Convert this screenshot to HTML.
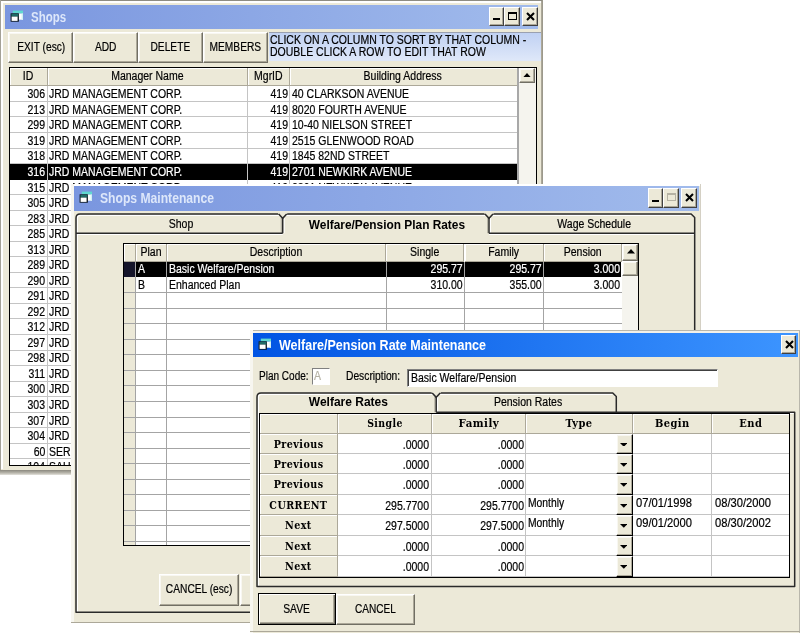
<!DOCTYPE html><html><head><meta charset="utf-8"><title>Shops</title><style>
*{box-sizing:border-box;margin:0;padding:0}
html,body{width:800px;height:633px;overflow:hidden;background:#fff}
body{position:relative;will-change:transform;font-family:"Liberation Sans",sans-serif;font-size:12px;color:#000}
.a{position:absolute}
.win{position:absolute;background:#ECE9D8;overflow:hidden}
.tb{position:absolute;color:#fff;font-weight:bold;font-size:14px;white-space:nowrap}
.cap{position:absolute;display:inline-block;transform-origin:0 50%;white-space:nowrap}
.cb{position:absolute;background:#ECE9D8;border:1px solid;border-color:#fff #404040 #404040 #fff;box-shadow:inset -1px -1px 0 #ACA899}
.btn{position:absolute;background:#ECE9D8;border:1px solid;border-color:#fff #716F64 #716F64 #fff;box-shadow:inset -1px -1px 0 #ACA899, inset 1px 1px 0 #F8F7F1;text-align:center;white-space:nowrap}
.t{display:inline-block;white-space:nowrap;transform:scaleX(.875);-webkit-text-stroke:.2px}
.tl{transform-origin:0 50%}
.tr{transform-origin:100% 50%}
.tc{transform-origin:50% 50%}
.grid{position:absolute;background:#fff;overflow:hidden}
.hl{position:absolute;height:1px;background:#C4C4C4}
.vl{position:absolute;width:1px;background:#C4C4C4}
.cell{position:absolute;white-space:nowrap;overflow:visible}
.hd{position:absolute;background:#ECE9D8;border-right:1px solid #ACA899;border-bottom:1px solid #ACA899;box-shadow:inset 1px 1px 0 #fff;text-align:center;white-space:nowrap}
.sb{position:absolute;background:#F5F4EE}
.serif{font-family:"DejaVu Serif","Liberation Serif",serif;font-weight:bold;font-size:11px;letter-spacing:.5px}
.serif .t{-webkit-text-stroke:0}
</style></head><body>
<div class="win" style="left:0;top:0;width:542.5px;height:469.5px">
<div class="a" style="left:0px;top:0px;width:542.5px;height:1px;background:#8E8C82"></div>
<div class="a" style="left:0px;top:0px;width:1px;height:469.5px;background:#A3A196"></div>
<div class="a" style="left:1px;top:1px;width:540.5px;height:2px;background:#fff"></div>
<div class="a" style="left:1px;top:1px;width:2px;height:468px;background:#fff"></div>
<div class="a" style="left:541.5px;top:0px;width:1.0px;height:469.5px;background:#9C998C"></div>
<div class="a" style="left:540.5px;top:1px;width:1.0px;height:468.5px;background:#ACA899"></div>
<div class="tb" style="left:5px;top:4.6px;width:533px;height:24.8px;line-height:24.8px;background:linear-gradient(90deg,#7A96DF,#A1BBEC);color:#DDE7FA">
<span class="cap" style="left:25.5px;top:0;transform:scaleX(.82)">Shops</span></div>
<svg class="a" style="left:10px;top:10px" width="14" height="12" viewBox="0 0 14 12"><rect x="2.8" y="0.6" width="10.2" height="3" fill="#5FD8D0"/><rect x="8" y="3.6" width="5" height="6.1" fill="#FDFDFD"/><rect x="11.6" y="3.6" width="1.4" height="6.1" fill="#CFF1F2"/><rect x="0.6" y="3.3" width="8.3" height="8.4" fill="#0C141C"/><rect x="1.4" y="3.8" width="7" height="2.8" fill="#1F6A66"/><rect x="1.6" y="6.6" width="6" height="4.3" fill="#fff"/></svg>
<div class="cb" style="left:489px;top:7px;width:14.5px;height:19px;"><div class="a" style="left:3px;top:10px;width:6.5px;height:2.3px;background:#000"></div></div>
<div class="cb" style="left:504px;top:7px;width:15.5px;height:19px;"><div class="a" style="left:2.5px;top:3.5px;width:9px;height:8.5px;border:1px solid #000;border-top-width:2px"></div></div>
<div class="cb" style="left:521.5px;top:7px;width:16.0px;height:19px;"><svg class="a" style="left:3px;top:4px" width="9" height="9" viewBox="0 0 9 9"><path d="M1 1 L8 8 M8 1 L1 8" stroke="#000" stroke-width="2.1"/></svg></div>
<div class="btn" style="left:8.2px;top:32px;width:65.3px;height:31.3px;line-height:29.5px"><span class="t tc" style="transform:scaleX(.85)">EXIT (esc)</span></div>
<div class="btn" style="left:73.2px;top:32px;width:65.3px;height:31.3px;line-height:29.5px"><span class="t tc" style="transform:scaleX(.85)">ADD</span></div>
<div class="btn" style="left:138.2px;top:32px;width:65.3px;height:31.3px;line-height:29.5px"><span class="t tc" style="transform:scaleX(.85)">DELETE</span></div>
<div class="btn" style="left:203.2px;top:32px;width:65.3px;height:31.3px;line-height:29.5px"><span class="t tc" style="transform:scaleX(.85)">MEMBERS</span></div>
<div class="a" style="left:269px;top:32px;width:272px;height:29px;background:linear-gradient(180deg,#C0D1F3,#DFE8F9);border-top:1px solid #9aa0b0"></div>
<div class="cell " style="left:270.3px;top:33.8px;width:267.7px;height:12.6px;line-height:12.6px;text-align:left;"><span class="t tl">CLICK ON A COLUMN TO SORT BY THAT COLUMN -</span></div>
<div class="cell " style="left:270.3px;top:45.7px;width:267.7px;height:12.6px;line-height:12.6px;text-align:left;"><span class="t tl">DOUBLE CLICK A ROW TO EDIT THAT ROW</span></div>
<div class="a" style="left:9px;top:66.5px;width:527.5px;height:399px;background:#000"></div>
<div class="grid" style="left:10px;top:67.5px;width:525.5px;height:397px">
<div class="hd" style="left:0px;top:0.0px;width:37.5px;height:18.4px;line-height:16.5px"><span class="t tc">ID</span></div>
<div class="hd" style="left:37.5px;top:0.0px;width:200.0px;height:18.4px;line-height:16.5px"><span class="t tc">Manager Name</span></div>
<div class="hd" style="left:237.5px;top:0.0px;width:42.0px;height:18.4px;line-height:16.5px"><span class="t tc">MgrID</span></div>
<div class="hd" style="left:279.5px;top:0.0px;width:228.0px;height:18.4px;line-height:16.5px"><span class="t tc">Building Address</span></div>
<div class="cell " style="left:0px;top:19.8px;width:35.5px;height:15.53px;line-height:15.53px;text-align:right;"><span class="t tr">306</span></div>
<div class="cell " style="left:38.5px;top:19.8px;width:197.5px;height:15.53px;line-height:15.53px;text-align:left;"><span class="t tl">JRD MANAGEMENT CORP.</span></div>
<div class="cell " style="left:238px;top:19.8px;width:40px;height:15.53px;line-height:15.53px;text-align:right;"><span class="t tr">419</span></div>
<div class="cell " style="left:281.8px;top:19.8px;width:226.2px;height:15.53px;line-height:15.53px;text-align:left;"><span class="t tl">40 CLARKSON AVENUE</span></div>
<div class="hl" style="left:0px;top:33.44px;width:507.2px;height:1.0px;"></div>
<div class="cell " style="left:0px;top:35.34px;width:35.5px;height:15.53px;line-height:15.53px;text-align:right;"><span class="t tr">213</span></div>
<div class="cell " style="left:38.5px;top:35.34px;width:197.5px;height:15.53px;line-height:15.53px;text-align:left;"><span class="t tl">JRD MANAGEMENT CORP.</span></div>
<div class="cell " style="left:238px;top:35.34px;width:40px;height:15.53px;line-height:15.53px;text-align:right;"><span class="t tr">419</span></div>
<div class="cell " style="left:281.8px;top:35.34px;width:226.2px;height:15.53px;line-height:15.53px;text-align:left;"><span class="t tl">8020 FOURTH AVENUE</span></div>
<div class="hl" style="left:0px;top:48.97px;width:507.2px;height:1.0px;"></div>
<div class="cell " style="left:0px;top:50.87px;width:35.5px;height:15.53px;line-height:15.53px;text-align:right;"><span class="t tr">299</span></div>
<div class="cell " style="left:38.5px;top:50.87px;width:197.5px;height:15.53px;line-height:15.53px;text-align:left;"><span class="t tl">JRD MANAGEMENT CORP.</span></div>
<div class="cell " style="left:238px;top:50.87px;width:40px;height:15.53px;line-height:15.53px;text-align:right;"><span class="t tr">419</span></div>
<div class="cell " style="left:281.8px;top:50.87px;width:226.2px;height:15.53px;line-height:15.53px;text-align:left;"><span class="t tl">10-40 NIELSON STREET</span></div>
<div class="hl" style="left:0px;top:64.5px;width:507.2px;height:1.0px;"></div>
<div class="cell " style="left:0px;top:66.41px;width:35.5px;height:15.53px;line-height:15.53px;text-align:right;"><span class="t tr">319</span></div>
<div class="cell " style="left:38.5px;top:66.41px;width:197.5px;height:15.53px;line-height:15.53px;text-align:left;"><span class="t tl">JRD MANAGEMENT CORP.</span></div>
<div class="cell " style="left:238px;top:66.41px;width:40px;height:15.53px;line-height:15.53px;text-align:right;"><span class="t tr">419</span></div>
<div class="cell " style="left:281.8px;top:66.41px;width:226.2px;height:15.53px;line-height:15.53px;text-align:left;"><span class="t tl">2515 GLENWOOD ROAD</span></div>
<div class="hl" style="left:0px;top:80.04px;width:507.2px;height:1.0px;"></div>
<div class="cell " style="left:0px;top:81.94px;width:35.5px;height:15.53px;line-height:15.53px;text-align:right;"><span class="t tr">318</span></div>
<div class="cell " style="left:38.5px;top:81.94px;width:197.5px;height:15.53px;line-height:15.53px;text-align:left;"><span class="t tl">JRD MANAGEMENT CORP.</span></div>
<div class="cell " style="left:238px;top:81.94px;width:40px;height:15.53px;line-height:15.53px;text-align:right;"><span class="t tr">419</span></div>
<div class="cell " style="left:281.8px;top:81.94px;width:226.2px;height:15.53px;line-height:15.53px;text-align:left;"><span class="t tl">1845 82ND STREET</span></div>
<div class="hl" style="left:0px;top:95.58px;width:507.2px;height:1.0px;"></div>
<div class="a" style="left:0px;top:96.57px;width:507.2px;height:15.53px;background:#000"></div>
<div class="cell " style="left:0px;top:97.47px;width:35.5px;height:15.53px;line-height:15.53px;text-align:right;color:#fff;"><span class="t tr">316</span></div>
<div class="cell " style="left:38.5px;top:97.47px;width:197.5px;height:15.53px;line-height:15.53px;text-align:left;color:#fff;"><span class="t tl">JRD MANAGEMENT CORP.</span></div>
<div class="cell " style="left:238px;top:97.47px;width:40px;height:15.53px;line-height:15.53px;text-align:right;color:#fff;"><span class="t tr">419</span></div>
<div class="cell " style="left:281.8px;top:97.47px;width:226.2px;height:15.53px;line-height:15.53px;text-align:left;color:#fff;"><span class="t tl">2701 NEWKIRK AVENUE</span></div>
<div class="cell " style="left:0px;top:113.01px;width:35.5px;height:15.53px;line-height:15.53px;text-align:right;"><span class="t tr">315</span></div>
<div class="cell " style="left:38.5px;top:113.01px;width:197.5px;height:15.53px;line-height:15.53px;text-align:left;"><span class="t tl">JRD MANAGEMENT CORP.</span></div>
<div class="cell " style="left:238px;top:113.01px;width:40px;height:15.53px;line-height:15.53px;text-align:right;"><span class="t tr">419</span></div>
<div class="cell " style="left:281.8px;top:113.01px;width:226.2px;height:15.53px;line-height:15.53px;text-align:left;"><span class="t tl">2801 NEWKIRK AVENUE</span></div>
<div class="hl" style="left:0px;top:126.65px;width:507.2px;height:1.0px;"></div>
<div class="cell " style="left:0px;top:128.55px;width:35.5px;height:15.53px;line-height:15.53px;text-align:right;"><span class="t tr">305</span></div>
<div class="cell " style="left:38.5px;top:128.55px;width:197.5px;height:15.53px;line-height:15.53px;text-align:left;"><span class="t tl">JRD MANAGEMENT CORP.</span></div>
<div class="cell " style="left:238px;top:128.55px;width:40px;height:15.53px;line-height:15.53px;text-align:right;"><span class="t tr">419</span></div>
<div class="cell " style="left:281.8px;top:128.55px;width:226.2px;height:15.53px;line-height:15.53px;text-align:left;"><span class="t tl">2901 NEWKIRK AVENUE</span></div>
<div class="hl" style="left:0px;top:142.18px;width:507.2px;height:1.0px;"></div>
<div class="cell " style="left:0px;top:144.08px;width:35.5px;height:15.53px;line-height:15.53px;text-align:right;"><span class="t tr">283</span></div>
<div class="cell " style="left:38.5px;top:144.08px;width:197.5px;height:15.53px;line-height:15.53px;text-align:left;"><span class="t tl">JRD MANAGEMENT CORP.</span></div>
<div class="cell " style="left:238px;top:144.08px;width:40px;height:15.53px;line-height:15.53px;text-align:right;"><span class="t tr">419</span></div>
<div class="cell " style="left:281.8px;top:144.08px;width:226.2px;height:15.53px;line-height:15.53px;text-align:left;"><span class="t tl">35 CLARKSON AVENUE</span></div>
<div class="hl" style="left:0px;top:157.72px;width:507.2px;height:1.0px;"></div>
<div class="cell " style="left:0px;top:159.62px;width:35.5px;height:15.53px;line-height:15.53px;text-align:right;"><span class="t tr">285</span></div>
<div class="cell " style="left:38.5px;top:159.62px;width:197.5px;height:15.53px;line-height:15.53px;text-align:left;"><span class="t tl">JRD MANAGEMENT CORP.</span></div>
<div class="cell " style="left:238px;top:159.62px;width:40px;height:15.53px;line-height:15.53px;text-align:right;"><span class="t tr">419</span></div>
<div class="cell " style="left:281.8px;top:159.62px;width:226.2px;height:15.53px;line-height:15.53px;text-align:left;"><span class="t tl">40 LINDEN BOULEVARD</span></div>
<div class="hl" style="left:0px;top:173.25px;width:507.2px;height:1.0px;"></div>
<div class="cell " style="left:0px;top:175.15px;width:35.5px;height:15.53px;line-height:15.53px;text-align:right;"><span class="t tr">313</span></div>
<div class="cell " style="left:38.5px;top:175.15px;width:197.5px;height:15.53px;line-height:15.53px;text-align:left;"><span class="t tl">JRD MANAGEMENT CORP.</span></div>
<div class="cell " style="left:238px;top:175.15px;width:40px;height:15.53px;line-height:15.53px;text-align:right;"><span class="t tr">419</span></div>
<div class="cell " style="left:281.8px;top:175.15px;width:226.2px;height:15.53px;line-height:15.53px;text-align:left;"><span class="t tl">50 LINDEN BOULEVARD</span></div>
<div class="hl" style="left:0px;top:188.79px;width:507.2px;height:1.0px;"></div>
<div class="cell " style="left:0px;top:190.68px;width:35.5px;height:15.54px;line-height:15.54px;text-align:right;"><span class="t tr">289</span></div>
<div class="cell " style="left:38.5px;top:190.68px;width:197.5px;height:15.54px;line-height:15.54px;text-align:left;"><span class="t tl">JRD MANAGEMENT CORP.</span></div>
<div class="cell " style="left:238px;top:190.68px;width:40px;height:15.54px;line-height:15.54px;text-align:right;"><span class="t tr">419</span></div>
<div class="cell " style="left:281.8px;top:190.68px;width:226.2px;height:15.54px;line-height:15.54px;text-align:left;"><span class="t tl">60 LINDEN BOULEVARD</span></div>
<div class="hl" style="left:0px;top:204.32px;width:507.2px;height:1.0px;"></div>
<div class="cell " style="left:0px;top:206.22px;width:35.5px;height:15.54px;line-height:15.54px;text-align:right;"><span class="t tr">290</span></div>
<div class="cell " style="left:38.5px;top:206.22px;width:197.5px;height:15.54px;line-height:15.54px;text-align:left;"><span class="t tl">JRD MANAGEMENT CORP.</span></div>
<div class="cell " style="left:238px;top:206.22px;width:40px;height:15.54px;line-height:15.54px;text-align:right;"><span class="t tr">419</span></div>
<div class="cell " style="left:281.8px;top:206.22px;width:226.2px;height:15.54px;line-height:15.54px;text-align:left;"><span class="t tl">70 LINDEN BOULEVARD</span></div>
<div class="hl" style="left:0px;top:219.86px;width:507.2px;height:1.0px;"></div>
<div class="cell " style="left:0px;top:221.75px;width:35.5px;height:15.54px;line-height:15.54px;text-align:right;"><span class="t tr">291</span></div>
<div class="cell " style="left:38.5px;top:221.75px;width:197.5px;height:15.54px;line-height:15.54px;text-align:left;"><span class="t tl">JRD MANAGEMENT CORP.</span></div>
<div class="cell " style="left:238px;top:221.75px;width:40px;height:15.54px;line-height:15.54px;text-align:right;"><span class="t tr">419</span></div>
<div class="cell " style="left:281.8px;top:221.75px;width:226.2px;height:15.54px;line-height:15.54px;text-align:left;"><span class="t tl">80 LINDEN BOULEVARD</span></div>
<div class="hl" style="left:0px;top:235.39px;width:507.2px;height:1.0px;"></div>
<div class="cell " style="left:0px;top:237.29px;width:35.5px;height:15.54px;line-height:15.54px;text-align:right;"><span class="t tr">292</span></div>
<div class="cell " style="left:38.5px;top:237.29px;width:197.5px;height:15.54px;line-height:15.54px;text-align:left;"><span class="t tl">JRD MANAGEMENT CORP.</span></div>
<div class="cell " style="left:238px;top:237.29px;width:40px;height:15.54px;line-height:15.54px;text-align:right;"><span class="t tr">419</span></div>
<div class="cell " style="left:281.8px;top:237.29px;width:226.2px;height:15.54px;line-height:15.54px;text-align:left;"><span class="t tl">90 LINDEN BOULEVARD</span></div>
<div class="hl" style="left:0px;top:250.93px;width:507.2px;height:1.0px;"></div>
<div class="cell " style="left:0px;top:252.82px;width:35.5px;height:15.54px;line-height:15.54px;text-align:right;"><span class="t tr">312</span></div>
<div class="cell " style="left:38.5px;top:252.82px;width:197.5px;height:15.54px;line-height:15.54px;text-align:left;"><span class="t tl">JRD MANAGEMENT CORP.</span></div>
<div class="cell " style="left:238px;top:252.82px;width:40px;height:15.54px;line-height:15.54px;text-align:right;"><span class="t tr">419</span></div>
<div class="cell " style="left:281.8px;top:252.82px;width:226.2px;height:15.54px;line-height:15.54px;text-align:left;"><span class="t tl">100 LINDEN BOULEVARD</span></div>
<div class="hl" style="left:0px;top:266.46px;width:507.2px;height:1.0px;"></div>
<div class="cell " style="left:0px;top:268.36px;width:35.5px;height:15.54px;line-height:15.54px;text-align:right;"><span class="t tr">297</span></div>
<div class="cell " style="left:38.5px;top:268.36px;width:197.5px;height:15.54px;line-height:15.54px;text-align:left;"><span class="t tl">JRD MANAGEMENT CORP.</span></div>
<div class="cell " style="left:238px;top:268.36px;width:40px;height:15.54px;line-height:15.54px;text-align:right;"><span class="t tr">419</span></div>
<div class="cell " style="left:281.8px;top:268.36px;width:226.2px;height:15.54px;line-height:15.54px;text-align:left;"><span class="t tl">110 LINDEN BOULEVARD</span></div>
<div class="hl" style="left:0px;top:282.0px;width:507.2px;height:1.0px;"></div>
<div class="cell " style="left:0px;top:283.89px;width:35.5px;height:15.54px;line-height:15.54px;text-align:right;"><span class="t tr">298</span></div>
<div class="cell " style="left:38.5px;top:283.89px;width:197.5px;height:15.54px;line-height:15.54px;text-align:left;"><span class="t tl">JRD MANAGEMENT CORP.</span></div>
<div class="cell " style="left:238px;top:283.89px;width:40px;height:15.54px;line-height:15.54px;text-align:right;"><span class="t tr">419</span></div>
<div class="cell " style="left:281.8px;top:283.89px;width:226.2px;height:15.54px;line-height:15.54px;text-align:left;"><span class="t tl">120 LINDEN BOULEVARD</span></div>
<div class="hl" style="left:0px;top:297.53px;width:507.2px;height:1.0px;"></div>
<div class="cell " style="left:0px;top:299.43px;width:35.5px;height:15.54px;line-height:15.54px;text-align:right;"><span class="t tr">311</span></div>
<div class="cell " style="left:38.5px;top:299.43px;width:197.5px;height:15.54px;line-height:15.54px;text-align:left;"><span class="t tl">JRD MANAGEMENT CORP.</span></div>
<div class="cell " style="left:238px;top:299.43px;width:40px;height:15.54px;line-height:15.54px;text-align:right;"><span class="t tr">419</span></div>
<div class="cell " style="left:281.8px;top:299.43px;width:226.2px;height:15.54px;line-height:15.54px;text-align:left;"><span class="t tl">130 LINDEN BOULEVARD</span></div>
<div class="hl" style="left:0px;top:313.06px;width:507.2px;height:1.0px;"></div>
<div class="cell " style="left:0px;top:314.97px;width:35.5px;height:15.54px;line-height:15.54px;text-align:right;"><span class="t tr">300</span></div>
<div class="cell " style="left:38.5px;top:314.97px;width:197.5px;height:15.54px;line-height:15.54px;text-align:left;"><span class="t tl">JRD MANAGEMENT CORP.</span></div>
<div class="cell " style="left:238px;top:314.97px;width:40px;height:15.54px;line-height:15.54px;text-align:right;"><span class="t tr">419</span></div>
<div class="cell " style="left:281.8px;top:314.97px;width:226.2px;height:15.54px;line-height:15.54px;text-align:left;"><span class="t tl">140 LINDEN BOULEVARD</span></div>
<div class="hl" style="left:0px;top:328.6px;width:507.2px;height:1.0px;"></div>
<div class="cell " style="left:0px;top:330.5px;width:35.5px;height:15.54px;line-height:15.54px;text-align:right;"><span class="t tr">303</span></div>
<div class="cell " style="left:38.5px;top:330.5px;width:197.5px;height:15.54px;line-height:15.54px;text-align:left;"><span class="t tl">JRD MANAGEMENT CORP.</span></div>
<div class="cell " style="left:238px;top:330.5px;width:40px;height:15.54px;line-height:15.54px;text-align:right;"><span class="t tr">419</span></div>
<div class="cell " style="left:281.8px;top:330.5px;width:226.2px;height:15.54px;line-height:15.54px;text-align:left;"><span class="t tl">150 LINDEN BOULEVARD</span></div>
<div class="hl" style="left:0px;top:344.14px;width:507.2px;height:1.0px;"></div>
<div class="cell " style="left:0px;top:346.03px;width:35.5px;height:15.54px;line-height:15.54px;text-align:right;"><span class="t tr">307</span></div>
<div class="cell " style="left:38.5px;top:346.03px;width:197.5px;height:15.54px;line-height:15.54px;text-align:left;"><span class="t tl">JRD MANAGEMENT CORP.</span></div>
<div class="cell " style="left:238px;top:346.03px;width:40px;height:15.54px;line-height:15.54px;text-align:right;"><span class="t tr">419</span></div>
<div class="cell " style="left:281.8px;top:346.03px;width:226.2px;height:15.54px;line-height:15.54px;text-align:left;"><span class="t tl">160 LINDEN BOULEVARD</span></div>
<div class="hl" style="left:0px;top:359.67px;width:507.2px;height:1.0px;"></div>
<div class="cell " style="left:0px;top:361.57px;width:35.5px;height:15.54px;line-height:15.54px;text-align:right;"><span class="t tr">304</span></div>
<div class="cell " style="left:38.5px;top:361.57px;width:197.5px;height:15.54px;line-height:15.54px;text-align:left;"><span class="t tl">JRD MANAGEMENT CORP.</span></div>
<div class="cell " style="left:238px;top:361.57px;width:40px;height:15.54px;line-height:15.54px;text-align:right;"><span class="t tr">419</span></div>
<div class="cell " style="left:281.8px;top:361.57px;width:226.2px;height:15.54px;line-height:15.54px;text-align:left;"><span class="t tl">170 LINDEN BOULEVARD</span></div>
<div class="hl" style="left:0px;top:375.2px;width:507.2px;height:1.0px;"></div>
<div class="cell " style="left:0px;top:377.11px;width:35.5px;height:15.54px;line-height:15.54px;text-align:right;"><span class="t tr">60</span></div>
<div class="cell " style="left:38.5px;top:377.11px;width:197.5px;height:15.54px;line-height:15.54px;text-align:left;"><span class="t tl">SER REALTY CORP.</span></div>
<div class="cell " style="left:238px;top:377.11px;width:40px;height:15.54px;line-height:15.54px;text-align:right;"><span class="t tr">419</span></div>
<div class="cell " style="left:281.8px;top:377.11px;width:226.2px;height:15.54px;line-height:15.54px;text-align:left;"><span class="t tl">180 LINDEN BOULEVARD</span></div>
<div class="hl" style="left:0px;top:390.74px;width:507.2px;height:1.0px;"></div>
<div class="cell " style="left:0px;top:392.64px;width:35.5px;height:15.54px;line-height:15.54px;text-align:right;"><span class="t tr">104</span></div>
<div class="cell " style="left:38.5px;top:392.64px;width:197.5px;height:15.54px;line-height:15.54px;text-align:left;"><span class="t tl">SAU REALTY CORP.</span></div>
<div class="cell " style="left:238px;top:392.64px;width:40px;height:15.54px;line-height:15.54px;text-align:right;"><span class="t tr">419</span></div>
<div class="cell " style="left:281.8px;top:392.64px;width:226.2px;height:15.54px;line-height:15.54px;text-align:left;"><span class="t tl">190 LINDEN BOULEVARD</span></div>
<div class="hl" style="left:0px;top:406.28px;width:507.2px;height:1.0px;"></div>
<div class="vl" style="left:37px;top:18.3px;width:1px;height:379.2px;"></div>
<div class="vl" style="left:237px;top:18.3px;width:1px;height:379.2px;"></div>
<div class="vl" style="left:279px;top:18.3px;width:1px;height:379.2px;"></div>
<div class="a" style="left:507.2px;top:0.0px;width:1.6px;height:397.5px;background:#A8A8A8"></div>
<div class="sb" style="left:508.8px;top:0.0px;width:17.2px;height:397.5px;"></div>
<div class="btn" style="left:508.8px;top:0.0px;width:16.5px;height:15.2px;"><svg class="a" style="left:3.5px;top:4px" width="8" height="4.5" viewBox="0 0 8 4.5"><path d="M0 4.5 L4 0 L8 4.5Z" fill="#000"/></svg></div>
</div>
</div>
<div class="a" style="left:0;top:469.5px;width:542.5px;height:5px;background:linear-gradient(180deg,#8A887E,#B9B7AD 60%,#E4E3DD)"></div>
<div class="win" style="left:71px;top:184px;width:629.5px;height:438.5px">
<div class="a" style="left:0px;top:0px;width:629.5px;height:2.3px;background:#fff"></div>
<div class="a" style="left:0px;top:0px;width:2.5px;height:438.5px;background:#F7F6F0"></div>
<div class="a" style="left:628.5px;top:0px;width:1.0px;height:438.5px;background:#D4D0C4"></div>
<div class="a" style="left:0px;top:437.5px;width:629.5px;height:1.0px;background:#ACA899"></div>
<div class="tb" style="left:2.8px;top:2.4px;width:625px;height:24.2px;line-height:24.2px;background:linear-gradient(90deg,#7A96DF,#A1BBEC);color:#DDE7FA">
<span class="cap" style="left:26px;top:0;transform:scaleX(.867)">Shops Maintenance</span></div>
<svg class="a" style="left:8.4px;top:7.3px" width="14" height="12" viewBox="0 0 14 12"><rect x="2.8" y="0.6" width="10.2" height="3" fill="#5FD8D0"/><rect x="8" y="3.6" width="5" height="6.1" fill="#FDFDFD"/><rect x="11.6" y="3.6" width="1.4" height="6.1" fill="#CFF1F2"/><rect x="0.6" y="3.3" width="8.3" height="8.4" fill="#0C141C"/><rect x="1.4" y="3.8" width="7" height="2.8" fill="#1F6A66"/><rect x="1.6" y="6.6" width="6" height="4.3" fill="#fff"/></svg>
<div class="cb" style="left:577px;top:4px;width:14.5px;height:19.5px;"><div class="a" style="left:3px;top:10.5px;width:6.5px;height:2.3px;background:#000"></div></div>
<div class="cb" style="left:592px;top:4px;width:16px;height:19.5px;"><div class="a" style="left:2.5px;top:3.5px;width:9px;height:8.5px;border:1px solid #B5B2A4;border-top-width:2px"></div></div>
<div class="cb" style="left:610px;top:4px;width:16px;height:19.5px;"><svg class="a" style="left:3px;top:4px" width="9" height="9" viewBox="0 0 9 9"><path d="M1 1 L8 8 M8 1 L1 8" stroke="#000" stroke-width="2.1"/></svg></div>
<svg class="a" style="left:2.6px;top:27.2px" width="622.7" height="404.2" viewBox="0 0 622.7 404.2"><path d="M3.4,401.2 L3.4,7.0 Q3.4,4.4 7.0,4.4 L616.7,4.4" fill="none" stroke="#fff" stroke-width="1.2"/><path d="M2.0,23.5 L208.7,23.5" stroke="#fff" stroke-width="1.2"/><path d="M415.0,23.5 L620.7,23.5" stroke="#fff" stroke-width="1.2"/><path d="M210.1,7.0 L210.1,22.2" stroke="#fff" stroke-width="1.2"/><path d="M207.3,7.0 L207.3,22.2" stroke="#B8B5A6" stroke-width="1.2"/><path d="M416.4,7.0 L416.4,22.2" stroke="#fff" stroke-width="1.2"/><path d="M413.6,7.0 L413.6,22.2" stroke="#B8B5A6" stroke-width="1.2"/><path d="M2.0,401.2 L2.0,7.0 Q2.0,3.0 6.0,3.0 L617.2,3.0 L620.7,6.5 L620.7,22.2 L620.7,401.2 Z" fill="none" stroke="#2A2A2A" stroke-width="1.5" stroke-linejoin="round"/><path d="M2.0,22.2 L208.7,22.2" stroke="#2A2A2A" stroke-width="1.5"/><path d="M415.0,22.2 L620.7,22.2" stroke="#2A2A2A" stroke-width="1.5"/><path d="M204.2,1.8 L213.2,1.8 L213.2,3.0 L208.7,7.5 L204.2,3.0 Z" fill="#ECE9D8"/><path d="M204.7,3.0 L208.7,7.3 L212.7,3.0" fill="none" stroke="#2A2A2A" stroke-width="1.5"/><path d="M208.7,7.0 L208.7,22.2" stroke="#2A2A2A" stroke-width="1.5"/><path d="M410.5,1.8 L419.5,1.8 L419.5,3.0 L415.0,7.5 L410.5,3.0 Z" fill="#ECE9D8"/><path d="M411.0,3.0 L415.0,7.3 L419.0,3.0" fill="none" stroke="#2A2A2A" stroke-width="1.5"/><path d="M415.0,7.0 L415.0,22.2" stroke="#2A2A2A" stroke-width="1.5"/></svg>
<div class="a" style="left:6.6px;top:30.5px;width:206.7px;height:19.200000000000017px;line-height:19.200000000000017px;text-align:center;"><span class="t tc" style="transform:scaleX(0.875);">Shop</span></div>
<div class="a" style="left:212.5px;top:31.7px;width:206.3px;height:19.200000000000017px;line-height:19.200000000000017px;text-align:center;font-weight:bold;"><span class="t tc" style="transform:scaleX(0.99);-webkit-text-stroke:0;">Welfare/Pension Plan Rates</span></div>
<div class="a" style="left:419.9px;top:30.5px;width:205.7px;height:19.200000000000017px;line-height:19.200000000000017px;text-align:center;"><span class="t tc" style="transform:scaleX(0.875);">Wage Schedule</span></div>
<div class="a" style="left:52px;top:58.5px;width:516px;height:303px;background:#000"></div>
<div class="grid" style="left:53px;top:59.5px;width:514px;height:301px">
<div class="hd" style="left:0px;top:0.0px;width:11.5px;height:18.0px;line-height:17px;"><span class="t tc"></span></div>
<div class="hd" style="left:11.5px;top:0.0px;width:31.0px;height:18.0px;line-height:17px;padding-left:2px;"><span class="t tc">Plan</span></div>
<div class="hd" style="left:42.5px;top:0.0px;width:219.8px;height:18.0px;line-height:17px;"><span class="t tc">Description</span></div>
<div class="hd" style="left:262.3px;top:0.0px;width:78.2px;height:18.0px;line-height:17px;"><span class="t tc">Single</span></div>
<div class="hd" style="left:340.5px;top:0.0px;width:79.3px;height:18.0px;line-height:17px;"><span class="t tc">Family</span></div>
<div class="hd" style="left:419.8px;top:0.0px;width:78.5px;height:18.0px;line-height:17px;"><span class="t tc">Pension</span></div>
<div class="a" style="left:0px;top:18.0px;width:11px;height:283.5px;background:#ECE9D8"></div>
<div class="a" style="left:0px;top:18.0px;width:497px;height:15.55px;background:#000"></div>
<div class="a" style="left:0px;top:18.0px;width:11px;height:15.55px;background:#15152A"></div>
<div class="cell " style="left:13.5px;top:18.8px;width:28.5px;height:15.55px;line-height:15.55px;text-align:left;color:#fff;"><span class="t tl">A</span></div>
<div class="cell " style="left:45px;top:18.8px;width:217px;height:15.55px;line-height:15.55px;text-align:left;color:#fff;"><span class="t tl">Basic Welfare/Pension</span></div>
<div class="cell " style="left:263px;top:18.8px;width:76px;height:15.55px;line-height:15.55px;text-align:right;color:#fff;"><span class="t tr">295.77</span></div>
<div class="cell " style="left:342px;top:18.8px;width:75.3px;height:15.55px;line-height:15.55px;text-align:right;color:#fff;"><span class="t tr">295.77</span></div>
<div class="cell " style="left:421px;top:18.8px;width:75px;height:15.55px;line-height:15.55px;text-align:right;color:#fff;"><span class="t tr">3.000</span></div>
<div class="cell " style="left:13.5px;top:34.35px;width:28.5px;height:15.55px;line-height:15.55px;text-align:left;"><span class="t tl">B</span></div>
<div class="cell " style="left:45px;top:34.35px;width:217px;height:15.55px;line-height:15.55px;text-align:left;"><span class="t tl">Enhanced Plan</span></div>
<div class="cell " style="left:263px;top:34.35px;width:76px;height:15.55px;line-height:15.55px;text-align:right;"><span class="t tr">310.00</span></div>
<div class="cell " style="left:342px;top:34.35px;width:75.3px;height:15.55px;line-height:15.55px;text-align:right;"><span class="t tr">355.00</span></div>
<div class="cell " style="left:421px;top:34.35px;width:75px;height:15.55px;line-height:15.55px;text-align:right;"><span class="t tr">3.000</span></div>
<div class="hl" style="left:0px;top:48.6px;width:498px;height:1.0px;background:#A4A4A4"></div>
<div class="hl" style="left:0px;top:64.15px;width:498px;height:1.0px;background:#A4A4A4"></div>
<div class="hl" style="left:0px;top:79.7px;width:498px;height:1.0px;background:#A4A4A4"></div>
<div class="hl" style="left:0px;top:95.25px;width:498px;height:1.0px;background:#A4A4A4"></div>
<div class="hl" style="left:0px;top:110.8px;width:498px;height:1.0px;background:#A4A4A4"></div>
<div class="hl" style="left:0px;top:126.35px;width:498px;height:1.0px;background:#A4A4A4"></div>
<div class="hl" style="left:0px;top:141.9px;width:498px;height:1.0px;background:#A4A4A4"></div>
<div class="hl" style="left:0px;top:157.45px;width:498px;height:1.0px;background:#A4A4A4"></div>
<div class="hl" style="left:0px;top:173.0px;width:498px;height:1.0px;background:#A4A4A4"></div>
<div class="hl" style="left:0px;top:188.55px;width:498px;height:1.0px;background:#A4A4A4"></div>
<div class="hl" style="left:0px;top:204.1px;width:498px;height:1.0px;background:#A4A4A4"></div>
<div class="hl" style="left:0px;top:219.65px;width:498px;height:1.0px;background:#A4A4A4"></div>
<div class="hl" style="left:0px;top:235.2px;width:498px;height:1.0px;background:#A4A4A4"></div>
<div class="hl" style="left:0px;top:250.75px;width:498px;height:1.0px;background:#A4A4A4"></div>
<div class="hl" style="left:0px;top:266.3px;width:498px;height:1.0px;background:#A4A4A4"></div>
<div class="hl" style="left:0px;top:281.85px;width:498px;height:1.0px;background:#A4A4A4"></div>
<div class="hl" style="left:0px;top:297.4px;width:498px;height:1.0px;background:#A4A4A4"></div>
<div class="vl" style="left:11px;top:18.0px;width:1px;height:283.5px;background:#A4A4A4"></div>
<div class="vl" style="left:42px;top:18.0px;width:1px;height:283.5px;background:#A4A4A4"></div>
<div class="vl" style="left:261.8px;top:18.0px;width:1.0px;height:283.5px;background:#A4A4A4"></div>
<div class="vl" style="left:340px;top:18.0px;width:1px;height:283.5px;background:#A4A4A4"></div>
<div class="vl" style="left:419.3px;top:18.0px;width:1.0px;height:283.5px;background:#A4A4A4"></div>
<div class="sb" style="left:498.3px;top:0.0px;width:15.7px;height:301.5px;"></div>
<div class="btn" style="left:498.3px;top:0.0px;width:15.7px;height:17.5px;"><svg class="a" style="left:3.5px;top:4.5px" width="8" height="4.5" viewBox="0 0 8 4.5"><path d="M0 4.5 L4 0 L8 4.5Z" fill="#000"/></svg></div>
<div class="btn" style="left:498.3px;top:17.5px;width:15.7px;height:14.5px;"></div>
</div>
<div class="btn" style="left:88px;top:390px;width:79.5px;height:31.5px;line-height:29.5px"><span class="t tc" style="transform:scaleX(.85)">CANCEL (esc)</span></div>
<div class="btn" style="left:168.5px;top:390px;width:79.5px;height:31.5px;"></div>
</div>
<div class="win" style="left:250px;top:329.5px;width:550px;height:303.5px">
<div class="a" style="left:0px;top:0.0px;width:550px;height:3.5px;background:#F3F1E9"></div>
<div class="a" style="left:0px;top:0.0px;width:550px;height:0.8px;background:#B9B7AC"></div>
<div class="a" style="left:549px;top:0.0px;width:1px;height:303.5px;background:#B9B7AC"></div>
<div class="a" style="left:0px;top:0.0px;width:2.5px;height:303.5px;background:#F7F6F0"></div>
<div class="a" style="left:0px;top:301.5px;width:550px;height:1px;background:#ACA899"></div>
<div class="tb" style="left:2.5px;top:3.6px;width:545.5px;height:23.8px;line-height:23.8px;background:linear-gradient(90deg,#0054E3,#3D95FF)">
<span class="cap" style="left:26.3px;top:0.6px;transform:scaleX(.894)">Welfare/Pension Rate Maintenance</span></div>
<svg class="a" style="left:8px;top:8.5px" width="14" height="12" viewBox="0 0 14 12"><rect x="2.8" y="0.6" width="10.2" height="3" fill="#5FD8D0"/><rect x="8" y="3.6" width="5" height="6.1" fill="#FDFDFD"/><rect x="11.6" y="3.6" width="1.4" height="6.1" fill="#CFF1F2"/><rect x="0.6" y="3.3" width="8.3" height="8.4" fill="#0C141C"/><rect x="1.4" y="3.8" width="7" height="2.8" fill="#1F6A66"/><rect x="1.6" y="6.6" width="6" height="4.3" fill="#fff"/></svg>
<div class="cb" style="left:530.6px;top:5.5px;width:15.1px;height:19.4px;"><svg class="a" style="left:3px;top:4px" width="9" height="9" viewBox="0 0 9 9"><path d="M1 1 L8 8 M8 1 L1 8" stroke="#000" stroke-width="2.1"/></svg></div>
<div class="cell " style="left:8.5px;top:38.2px;width:61.5px;height:17.0px;line-height:17.0px;text-align:left;"><span class="t tl" style="transform:scaleX(0.835)">Plan Code:</span></div>
<div class="a" style="left:61.7px;top:38.5px;width:18.3px;height:16.5px;background:#fff;border:1px solid;border-color:#808080 #fff #fff #808080;color:#B5B2A4;line-height:14.5px;padding-left:1.5px"><span class="t tl">A</span></div>
<div class="cell " style="left:96px;top:38.8px;width:74px;height:17.0px;line-height:17.0px;text-align:left;"><span class="t tl" style="transform:scaleX(0.855)">Description:</span></div>
<div class="a" style="left:156.5px;top:39.5px;width:311.0px;height:17.5px;background:#fff;border:1px solid;border-color:#808080 #fff #fff #808080;box-shadow:inset 1px 1px 0 #404040;line-height:16px;padding-left:3.5px"><span class="t tl">Basic Welfare/Pension</span></div>
<svg class="a" style="left:5.0px;top:60.3px" width="541.7" height="199.4" viewBox="0 0 541.7 199.4"><path d="M3.4,196.4 L3.4,7.0 Q3.4,4.4 7.0,4.4 L357.3,4.4" fill="none" stroke="#fff" stroke-width="1.2"/><path d="M181.2,23.5 L361.3,23.5" stroke="#fff" stroke-width="1.2"/><path d="M361.3,23.5 L539.7,23.5" stroke="#fff" stroke-width="1.2"/><path d="M182.6,7.0 L182.6,22.2" stroke="#fff" stroke-width="1.2"/><path d="M179.8,7.0 L179.8,22.2" stroke="#B8B5A6" stroke-width="1.2"/><path d="M2.0,196.4 L2.0,7.0 Q2.0,3.0 6.0,3.0 L357.8,3.0 L361.3,6.5 L361.3,22.2 L539.7,22.2 L539.7,196.4 Z" fill="none" stroke="#2A2A2A" stroke-width="1.5" stroke-linejoin="round"/><path d="M181.2,22.2 L361.3,22.2" stroke="#2A2A2A" stroke-width="1.5"/><path d="M176.7,1.8 L185.7,1.8 L185.7,3.0 L181.2,7.5 L176.7,3.0 Z" fill="#ECE9D8"/><path d="M177.2,3.0 L181.2,7.3 L185.2,3.0" fill="none" stroke="#2A2A2A" stroke-width="1.5"/><path d="M181.2,7.0 L181.2,22.2" stroke="#2A2A2A" stroke-width="1.5"/></svg>
<div class="a" style="left:9.0px;top:63.9px;width:178.7px;height:19.19999999999999px;line-height:19.19999999999999px;text-align:center;font-weight:bold;"><span class="t tc" style="transform:scaleX(1);-webkit-text-stroke:0;">Welfare Rates</span></div>
<div class="a" style="left:187.7px;top:63.5px;width:180.1px;height:19.19999999999999px;line-height:19.19999999999999px;text-align:center;"><span class="t tc" style="transform:scaleX(0.875);">Pension Rates</span></div>
<div class="a" style="left:8.6px;top:83px;width:531.7px;height:165.5px;background:#000"></div>
<div class="grid" style="left:9.8px;top:84px;width:529px;height:163px">
<div class="hd serif" style="left:0.0px;top:0.0px;width:78.5px;height:20.0px;line-height:19.5px"><span class="t tc" style="transform:scaleX(1)"></span></div>
<div class="hd serif" style="left:78.5px;top:0.0px;width:93.7px;height:20.0px;line-height:19.5px"><span class="t tc" style="transform:scaleX(0.85)">Single</span></div>
<div class="hd serif" style="left:172.2px;top:0.0px;width:94.2px;height:20.0px;line-height:19.5px"><span class="t tc" style="transform:scaleX(0.93)">Family</span></div>
<div class="hd serif" style="left:266.4px;top:0.0px;width:106.6px;height:20.0px;line-height:19.5px"><span class="t tc" style="transform:scaleX(0.9)">Type</span></div>
<div class="hd serif" style="left:373.0px;top:0.0px;width:79.2px;height:20.0px;line-height:19.5px"><span class="t tc" style="transform:scaleX(0.9)">Begin</span></div>
<div class="hd serif" style="left:452.2px;top:0.0px;width:78px;height:20.0px;line-height:19.5px"><span class="t tc" style="transform:scaleX(0.9)">End</span></div>
<div class="hd serif" style="left:0.0px;top:20.0px;width:78.5px;height:20.45px;line-height:21.45px"><span class="t tc" style="transform:scaleX(.87)">Previous</span></div>
<div class="cell " style="left:78.5px;top:21.0px;width:91.2px;height:20.45px;line-height:20.45px;text-align:right;"><span class="t tr">.0000</span></div>
<div class="cell " style="left:172.2px;top:21.0px;width:91.7px;height:20.45px;line-height:20.45px;text-align:right;"><span class="t tr">.0000</span></div>
<div class="hl" style="left:78.5px;top:39.45px;width:451.7px;height:1.0px;"></div>
<div class="btn" style="left:356.2px;top:20.0px;width:17px;height:20.45px;border-right-color:#000;border-bottom-color:#000"><svg class="a" style="left:2.8px;top:8px" width="7.6" height="3.8" viewBox="0 0 7.6 3.8"><path d="M0 0 L7.6 0 L3.8 3.8Z" fill="#000"/></svg></div>
<div class="hd serif" style="left:0.0px;top:40.45px;width:78.5px;height:20.45px;line-height:21.45px"><span class="t tc" style="transform:scaleX(.87)">Previous</span></div>
<div class="cell " style="left:78.5px;top:41.45px;width:91.2px;height:20.45px;line-height:20.45px;text-align:right;"><span class="t tr">.0000</span></div>
<div class="cell " style="left:172.2px;top:41.45px;width:91.7px;height:20.45px;line-height:20.45px;text-align:right;"><span class="t tr">.0000</span></div>
<div class="hl" style="left:78.5px;top:59.9px;width:451.7px;height:1.0px;"></div>
<div class="btn" style="left:356.2px;top:40.45px;width:17px;height:20.45px;border-right-color:#000;border-bottom-color:#000"><svg class="a" style="left:2.8px;top:8px" width="7.6" height="3.8" viewBox="0 0 7.6 3.8"><path d="M0 0 L7.6 0 L3.8 3.8Z" fill="#000"/></svg></div>
<div class="hd serif" style="left:0.0px;top:60.9px;width:78.5px;height:20.45px;line-height:21.45px"><span class="t tc" style="transform:scaleX(.87)">Previous</span></div>
<div class="cell " style="left:78.5px;top:61.9px;width:91.2px;height:20.45px;line-height:20.45px;text-align:right;"><span class="t tr">.0000</span></div>
<div class="cell " style="left:172.2px;top:61.9px;width:91.7px;height:20.45px;line-height:20.45px;text-align:right;"><span class="t tr">.0000</span></div>
<div class="hl" style="left:78.5px;top:80.35px;width:451.7px;height:1.0px;"></div>
<div class="btn" style="left:356.2px;top:60.9px;width:17px;height:20.45px;border-right-color:#000;border-bottom-color:#000"><svg class="a" style="left:2.8px;top:8px" width="7.6" height="3.8" viewBox="0 0 7.6 3.8"><path d="M0 0 L7.6 0 L3.8 3.8Z" fill="#000"/></svg></div>
<div class="hd serif" style="left:0.0px;top:81.35px;width:78.5px;height:20.45px;line-height:21.45px"><span class="t tc" style="transform:scaleX(.87)">CURRENT</span></div>
<div class="cell " style="left:78.5px;top:82.35px;width:91.2px;height:20.45px;line-height:20.45px;text-align:right;"><span class="t tr">295.7700</span></div>
<div class="cell " style="left:172.2px;top:82.35px;width:91.7px;height:20.45px;line-height:20.45px;text-align:right;"><span class="t tr">295.7700</span></div>
<div class="cell " style="left:268.7px;top:80.15px;width:104.3px;height:18.45px;line-height:18.45px;text-align:left;"><span class="t tl" style="transform:scaleX(0.86)">Monthly</span></div>
<div class="cell " style="left:376.5px;top:80.05px;width:75.7px;height:18.45px;line-height:18.45px;text-align:left;"><span class="t tl" style="transform:scaleX(0.93)">07/01/1998</span></div>
<div class="cell " style="left:455.7px;top:80.05px;width:74.5px;height:18.45px;line-height:18.45px;text-align:left;"><span class="t tl" style="transform:scaleX(0.93)">08/30/2000</span></div>
<div class="hl" style="left:78.5px;top:100.8px;width:451.7px;height:1.0px;"></div>
<div class="btn" style="left:356.2px;top:81.35px;width:17px;height:20.45px;border-right-color:#000;border-bottom-color:#000"><svg class="a" style="left:2.8px;top:8px" width="7.6" height="3.8" viewBox="0 0 7.6 3.8"><path d="M0 0 L7.6 0 L3.8 3.8Z" fill="#000"/></svg></div>
<div class="hd serif" style="left:0.0px;top:101.8px;width:78.5px;height:20.45px;line-height:21.45px"><span class="t tc" style="transform:scaleX(.87)">Next</span></div>
<div class="cell " style="left:78.5px;top:102.8px;width:91.2px;height:20.45px;line-height:20.45px;text-align:right;"><span class="t tr">297.5000</span></div>
<div class="cell " style="left:172.2px;top:102.8px;width:91.7px;height:20.45px;line-height:20.45px;text-align:right;"><span class="t tr">297.5000</span></div>
<div class="cell " style="left:268.7px;top:100.6px;width:104.3px;height:18.45px;line-height:18.45px;text-align:left;"><span class="t tl" style="transform:scaleX(0.86)">Monthly</span></div>
<div class="cell " style="left:376.5px;top:100.5px;width:75.7px;height:18.45px;line-height:18.45px;text-align:left;"><span class="t tl" style="transform:scaleX(0.93)">09/01/2000</span></div>
<div class="cell " style="left:455.7px;top:100.5px;width:74.5px;height:18.45px;line-height:18.45px;text-align:left;"><span class="t tl" style="transform:scaleX(0.93)">08/30/2002</span></div>
<div class="hl" style="left:78.5px;top:121.25px;width:451.7px;height:1.0px;"></div>
<div class="btn" style="left:356.2px;top:101.8px;width:17px;height:20.45px;border-right-color:#000;border-bottom-color:#000"><svg class="a" style="left:2.8px;top:8px" width="7.6" height="3.8" viewBox="0 0 7.6 3.8"><path d="M0 0 L7.6 0 L3.8 3.8Z" fill="#000"/></svg></div>
<div class="hd serif" style="left:0.0px;top:122.25px;width:78.5px;height:20.45px;line-height:21.45px"><span class="t tc" style="transform:scaleX(.87)">Next</span></div>
<div class="cell " style="left:78.5px;top:123.25px;width:91.2px;height:20.45px;line-height:20.45px;text-align:right;"><span class="t tr">.0000</span></div>
<div class="cell " style="left:172.2px;top:123.25px;width:91.7px;height:20.45px;line-height:20.45px;text-align:right;"><span class="t tr">.0000</span></div>
<div class="hl" style="left:78.5px;top:141.7px;width:451.7px;height:1.0px;"></div>
<div class="btn" style="left:356.2px;top:122.25px;width:17px;height:20.45px;border-right-color:#000;border-bottom-color:#000"><svg class="a" style="left:2.8px;top:8px" width="7.6" height="3.8" viewBox="0 0 7.6 3.8"><path d="M0 0 L7.6 0 L3.8 3.8Z" fill="#000"/></svg></div>
<div class="hd serif" style="left:0.0px;top:142.7px;width:78.5px;height:20.45px;line-height:21.45px"><span class="t tc" style="transform:scaleX(.87)">Next</span></div>
<div class="cell " style="left:78.5px;top:143.7px;width:91.2px;height:20.45px;line-height:20.45px;text-align:right;"><span class="t tr">.0000</span></div>
<div class="cell " style="left:172.2px;top:143.7px;width:91.7px;height:20.45px;line-height:20.45px;text-align:right;"><span class="t tr">.0000</span></div>
<div class="hl" style="left:78.5px;top:162.15px;width:451.7px;height:1.0px;"></div>
<div class="btn" style="left:356.2px;top:142.7px;width:17px;height:20.45px;border-right-color:#000;border-bottom-color:#000"><svg class="a" style="left:2.8px;top:8px" width="7.6" height="3.8" viewBox="0 0 7.6 3.8"><path d="M0 0 L7.6 0 L3.8 3.8Z" fill="#000"/></svg></div>
<div class="vl" style="left:171.2px;top:20.0px;width:1px;height:143.5px;"></div>
<div class="vl" style="left:265.4px;top:20.0px;width:1.0px;height:143.5px;"></div>
<div class="vl" style="left:451.2px;top:20.0px;width:1px;height:143.5px;"></div>
</div>
<div class="btn" style="left:7.5px;top:263.5px;width:78.5px;height:32px;line-height:30px;border:1px solid #000;box-shadow:inset 1px 1px 0 #fff, inset -1px -1px 0 #716F64, inset -2px -2px 0 #ACA899"><span class="t tc" style="transform:scaleX(.86)">SAVE</span></div>
<div class="btn" style="left:86px;top:264.5px;width:78.5px;height:30.5px;line-height:28.5px"><span class="t tc" style="transform:scaleX(.84)">CANCEL</span></div>
</div>
</body></html>
